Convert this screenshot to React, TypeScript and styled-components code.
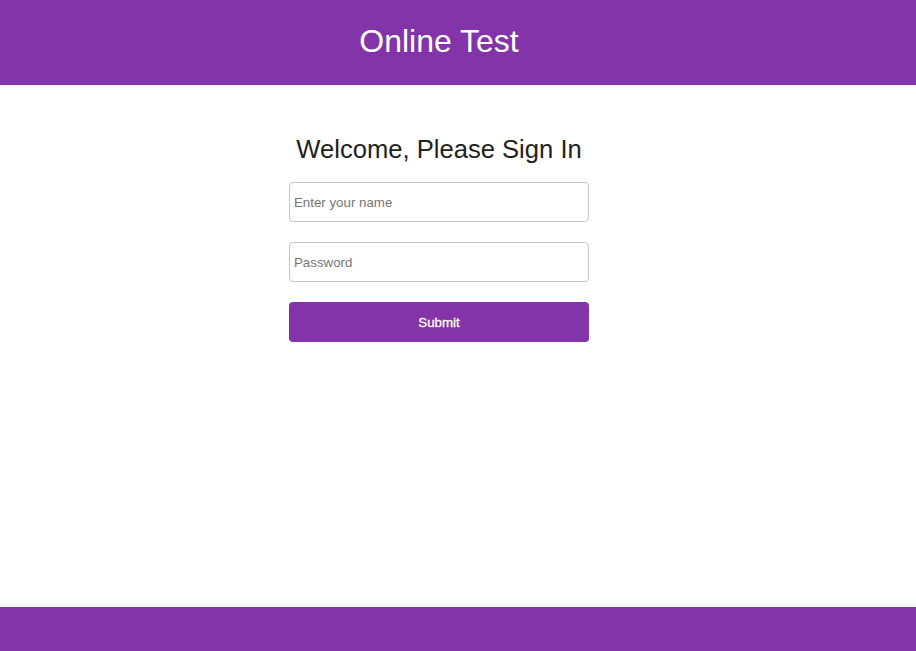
import React from 'react';
import styled, {createGlobalStyle} from 'styled-components';

const PURPLE = '#8334a8';

const GlobalStyle = createGlobalStyle`
  html, body {
    margin: 0;
    padding: 0;
    background: #fff;
    font-family: Arial, 'Liberation Sans', sans-serif;
  }
`;

const Page = styled.div`
  display: flex;
  flex-direction: column;
  min-height: 100vh;
`;

const Header = styled.header`
  height: 85px;
  background: ${PURPLE};
  display: flex;
  align-items: center;
  justify-content: center;
  padding-right: 38px;
`;

const Title = styled.h1`
  margin: 0;
  font-size: 32px;
  font-weight: normal;
  color: #fff;
  line-height: 1;
  padding-bottom: 4px;
`;

const Main = styled.main`
  flex: 1;
  display: flex;
  justify-content: center;
  padding: 50px 38px 0 0;
`;

const Form = styled.form`
  width: 300px;
  display: flex;
  flex-direction: column;
  gap: 20px;
`;

const Heading = styled.h2`
  margin: 0 -40px -2px;
  font-size: 25.6px;
  line-height: 29px;
  font-weight: normal;
  color: #222;
  text-align: center;
`;

const Input = styled.input`
  box-sizing: border-box;
  width: 100%;
  height: 40px;
  padding: 1px 4px 0;
  border: 1px solid #c8c8c8;
  border-radius: 4px;
  font-family: Arial, 'Liberation Sans', sans-serif;
  font-size: 13.3px;
  color: #333;
  outline: none;

  &::placeholder {
    color: #767676;
  }
`;

const SubmitButton = styled.button`
  height: 40px;
  border: none;
  border-radius: 4px;
  background: ${PURPLE};
  color: #fff;
  font-family: Arial, 'Liberation Sans', sans-serif;
  font-size: 13.3px;
  font-weight: normal;
  -webkit-text-stroke: 0.3px #fff;
  cursor: pointer;
`;

const Footer = styled.footer`
  height: 44px;
  background: ${PURPLE};
`;

export default function App() {
  return (
    <Page>
      <GlobalStyle />
      <Header>
        <Title>Online Test</Title>
      </Header>
      <Main>
        <Form onSubmit={e => e.preventDefault()}>
          <Heading>Welcome, Please Sign In</Heading>
          <Input type="text" placeholder="Enter your name" />
          <Input type="password" placeholder="Password" />
          <SubmitButton type="submit">Submit</SubmitButton>
        </Form>
      </Main>
      <Footer />
    </Page>
  );
}
